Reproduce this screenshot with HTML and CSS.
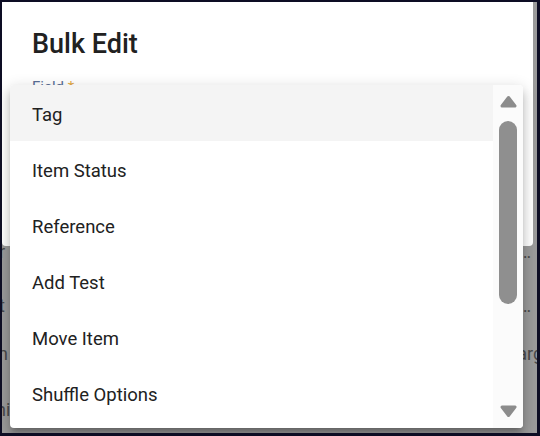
FILE: index.html
```html
<!DOCTYPE html>
<html>
<head>
<meta charset="utf-8">
<link rel="stylesheet" href="styles.css">
</head>
<body>
<div class="screen">
  <div class="top">
    <div class="dialog">
      <h1 class="title">Bulk Edit</h1>
      <div class="label">Field <span class="req">*</span></div>
    </div>
    <div class="strip"></div>
  </div>
  <div class="rows">
    <div class="row r1"><span class="lead">r</span><span class="tail">…</span></div>
    <div class="row r2"><span class="lead">t</span><span class="tail">…</span></div>
    <div class="row r3"><span class="lead">n</span><span class="tail">Larg</span></div>
    <div class="row r4"><span class="lead">hi</span><span class="tail"></span></div>
  </div>
  <div class="menu">
    <ul class="list">
      <li class="item active">Tag</li>
      <li class="item">Item Status</li>
      <li class="item">Reference</li>
      <li class="item">Add Test</li>
      <li class="item">Move Item</li>
      <li class="item">Shuffle Options</li>
    </ul>
    <div class="scrollbar">
      <svg class="arrow" width="19" height="13" viewBox="0 0 19 13"><polygon points="3,11 9.5,2.5 16,11" fill="#8c8c8c" stroke="#8c8c8c" stroke-width="3" stroke-linejoin="round"/></svg>
      <div class="track"><div class="thumb"></div></div>
      <svg class="arrow" width="19" height="13" viewBox="0 0 19 13"><polygon points="3,2 9.5,10.5 16,2" fill="#8c8c8c" stroke="#8c8c8c" stroke-width="3" stroke-linejoin="round"/></svg>
    </div>
  </div>
</div>
</body>
</html>
```
FILE: styles.css
```css
html, body {
  margin: 0;
  padding: 0;
}
body {
  background: #0d0d24;
  font-family: Roboto, "Liberation Sans", sans-serif;
  width: 540px;
  height: 436px;
  overflow: hidden;
}
.screen {
  position: relative;
  margin: 2px 3px 3px 2px;
  width: 535px;
  height: 431px;
  background: #9b9b9b;
  overflow: hidden;
}
.top {
  display: flex;
  position: relative;
  z-index: 1;
}
.dialog {
  width: 531px;
  height: 244px;
  background: #ffffff;
  border-radius: 0 0 4px 4px;
  box-sizing: border-box;
  padding: 26px 30px 0 30px;
}
.strip {
  flex: 1;
}
.title {
  margin: 0;
  font-size: 27px;
  line-height: 32px;
  font-weight: 500;
  color: #212121;
}
.label {
  margin-top: 19px;
  font-size: 15px;
  line-height: 17px;
  color: #5a6f96;
}
.req {
  color: #e2a947;
}
.rows {
  margin-top: -22px;
  display: flex;
  flex-direction: column;
}
.row {
  display: flex;
  justify-content: space-between;
  align-items: center;
  font-size: 18px;
  color: #4a4a4a;
  white-space: nowrap;
}
.r1 { height: 54px; }
.r2 { height: 54px; }
.r3 { height: 42px; }
.r4 { height: 70px; }
.r1 .lead { margin-left: -3px; }
.r2 .lead { margin-left: -3px; }
.r3 .lead { margin-left: -4px; }
.r4 .lead { margin-left: -6px; }
.tail {
  margin-right: 6px;
}
.r3 .tail { margin-right: -6px; }
.menu {
  position: absolute;
  left: 8px;
  top: 83px;
  width: 513px;
  height: 343px;
  background: #ffffff;
  border-radius: 4px;
  display: flex;
  z-index: 2;
  box-shadow: 0 5px 5px -3px rgba(0,0,0,0.2), 0 8px 10px 1px rgba(0,0,0,0.14), 0 3px 14px 2px rgba(0,0,0,0.12);
  overflow: hidden;
}
.list {
  list-style: none;
  margin: 0;
  padding: 0;
  flex: 1;
}
.item {
  height: 56px;
  box-sizing: border-box;
  padding-top: 3px;
  display: flex;
  align-items: center;
  padding-left: 22px;
  font-size: 18.5px;
  color: #212121;
}
.item.active {
  background: #f4f4f4;
}
.scrollbar {
  width: 30px;
  background: #fbfbfb;
  display: flex;
  flex-direction: column;
  align-items: center;
  padding: 10px 0;
  box-sizing: border-box;
}
.arrow {
  display: block;
  flex: none;
}
.track {
  flex: 1;
  width: 100%;
  display: flex;
  justify-content: center;
  padding-top: 13px;
}
.thumb {
  width: 18px;
  height: 183px;
  border-radius: 9px;
  background: #8f8f8f;
}
```
